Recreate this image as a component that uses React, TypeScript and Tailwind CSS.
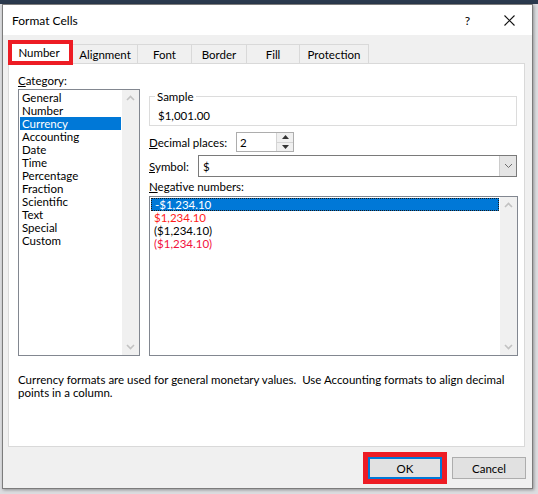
import React from 'react';

const categories = ['General', 'Number', 'Currency', 'Accounting', 'Date', 'Time', 'Percentage', 'Fraction', 'Scientific', 'Text', 'Special', 'Custom'];

const negatives = [
  { text: '-$1,234.10', color: 'text-white', selected: true },
  { text: '$1,234.10', color: 'text-[#ff1a1a]', selected: false },
  { text: '($1,234.10)', color: 'text-black', selected: false },
  { text: '($1,234.10)', color: 'text-[#f2103c]', selected: false },
];

const tabs = [
  { label: 'Alignment', w: 'w-[66px]' },
  { label: 'Font', w: 'w-[55px]' },
  { label: 'Border', w: 'w-[56px]' },
  { label: 'Fill', w: 'w-[54px]' },
  { label: 'Protection', w: 'w-[70px]' },
];

const Chevron = ({ up }: { up?: boolean }) => (
  <svg width="9" height="6" viewBox="0 0 9 6">
    <polyline
      points={up ? '1,5 4.5,1.5 8,5' : '1,1 4.5,4.5 8,1'}
      fill="none"
      stroke="#c2c2c2"
      strokeWidth="1.6"
    />
  </svg>
);

// scroll strip used by both list boxes
const ScrollStrip = () => (
  <div className="w-[17px] bg-[#f0f0f0] flex flex-col items-center justify-between py-[5px]">
    <Chevron up />
    <Chevron />
  </div>
);

export default function App() {
  return (
    <div className="w-[538px] h-[494px] overflow-hidden bg-[linear-gradient(to_bottom,#2b3a4e_0,#2b3a4e_4px,#dcdde0_4px)] pt-[4px] pl-[2px] font-['Lato','Liberation_Sans',sans-serif] text-[11.5px] leading-[13px] text-black">
      <div className="w-[531px] h-[485px] border border-[#7c7c7c] bg-[#f0f0f0] flex flex-col shadow-[1px_1px_3px_rgba(0,0,0,0.35)]">
        {/* title bar */}
        <div className="h-[30px] bg-white flex items-center pl-[9px] pr-[17px]">
          <span className="text-[12px]">Format Cells</span>
          <span className="ml-auto text-[12px] mr-[34px]">?</span>
          <svg width="11" height="11" viewBox="0 0 11 11">
            <path d="M0.5 0.5 L10.5 10.5 M10.5 0.5 L0.5 10.5" stroke="#111" strokeWidth="1.1" />
          </svg>
        </div>

        {/* tabs */}
        <div className="flex items-end h-[23px] mt-[5px] pl-[5px]">
          <div className="relative w-[65px] h-[23px] bg-white flex items-center justify-center">
            <span className="mr-[3px] pt-[1px]">Number</span>
            <span className="absolute left-0 right-0 top-0 -bottom-[2px] border-[4px] border-[#ed1c24] z-10" />
          </div>
          {tabs.map((t) => (
            <div
              key={t.label}
              className={`${t.w} -ml-px first:ml-0 h-[19px] border border-b-0 border-[#d9d9d9] bg-[#f0f0f0] flex items-center justify-center`}
            >
              {t.label}
            </div>
          ))}
        </div>

        {/* tab panel */}
        <div className="ml-[5px] w-[517px] h-[384px] bg-white border border-[#d9d9d9] pt-[9px] pl-[9px]">
          <div className="flex">
            {/* category */}
            <div className="w-[122px] flex flex-col">
              <div className="h-[13px] mt-[1px]">
                <span className="underline">C</span>ategory:
              </div>
              <div className="mt-[2px] h-[267px] border border-[#828790] flex">
                <div className="flex-1 p-[1px]">
                  {categories.map((c) => (
                    <div
                      key={c}
                      className={`h-[13px] pl-[2px] ${c === 'Currency' ? 'bg-[#0078d7] text-white' : ''}`}
                    >
                      {c}
                    </div>
                  ))}
                </div>
                <ScrollStrip />
              </div>
            </div>

            {/* right side */}
            <div className="ml-[9px] w-[369px] pt-[17px] flex flex-col">
              <fieldset className="w-[368px] h-[36px] border border-[#dcdcdc] pl-[8px]">
                <legend className="ml-[-3px] px-[2px] leading-[13px]">Sample</legend>
                <div className="mt-[6px]">$1,001.00</div>
              </fieldset>

              <div className="mt-[6px] h-[20px] flex items-center">
                <span className="w-[87px]">
                  <span className="underline">D</span>ecimal places:
                </span>
                <div className="w-[58px] h-[20px] border border-[#adadad] flex">
                  <span className="flex-1 pl-[3px] flex items-center">2</span>
                  <div className="w-[17px] flex flex-col border-l border-[#d4d4d4] bg-[#f0f0f0]">
                    <div className="flex-1 flex items-center justify-center border-b border-[#d4d4d4]">
                      <svg width="7" height="4" viewBox="0 0 7 4"><polygon points="0,4 3.5,0 7,4" fill="#333" /></svg>
                    </div>
                    <div className="flex-1 flex items-center justify-center">
                      <svg width="7" height="4" viewBox="0 0 7 4"><polygon points="0,0 3.5,4 7,0" fill="#333" /></svg>
                    </div>
                  </div>
                </div>
              </div>

              <div className="mt-[3px] h-[22px] flex items-center">
                <span className="w-[49px]">
                  <span className="underline">S</span>ymbol:
                </span>
                <div className="w-[319px] h-[22px] border border-[#7a7a7a] flex">
                  <span className="flex-1 pl-[4px] flex items-center">$</span>
                  <div className="w-[17px] bg-[#e5e5e5] border-l border-[#cccccc] flex items-center justify-center">
                    <svg width="9" height="6" viewBox="0 0 9 6">
                      <polyline points="1,1 4.5,4.5 8,1" fill="none" stroke="#6d6d6d" strokeWidth="1" />
                    </svg>
                  </div>
                </div>
              </div>

              <div className="mt-[3px] h-[13px]">
                <span className="underline">N</span>egative numbers:
              </div>
              <div className="mt-[3px] w-[369px] h-[160px] border border-[#828790] flex">
                <div className="flex-1 p-[1px]">
                  {negatives.map((n, i) => (
                    <div
                      key={i}
                      className={`h-[13px] pl-[3px] ${n.color} ${n.selected ? 'bg-[#0078d7] border border-dotted border-[#1a1a1a] pl-[2px] leading-[11px]' : ''}`}
                    >
                      {n.text}
                    </div>
                  ))}
                </div>
                <ScrollStrip />
              </div>
            </div>
          </div>

          <p className="mt-[17px] whitespace-nowrap">
            Currency formats are used for general monetary values.&nbsp; Use Accounting formats to align decimal
            <br />
            points in a column.
          </p>
        </div>

        {/* buttons */}
        <div className="mt-[5px] flex items-center justify-end pr-[6px] gap-[5px]">
          <div className="border-[5px] border-[#ed1c24]">
            <button className="w-[74px] h-[22px] bg-[#e1e1e1] border-2 border-[#0078d7] text-[11.5px]">OK</button>
          </div>
          <button className="w-[74px] h-[22px] bg-[#e1e1e1] border border-[#adadad] text-[11.5px]">Cancel</button>
        </div>
      </div>
    </div>
  );
}
